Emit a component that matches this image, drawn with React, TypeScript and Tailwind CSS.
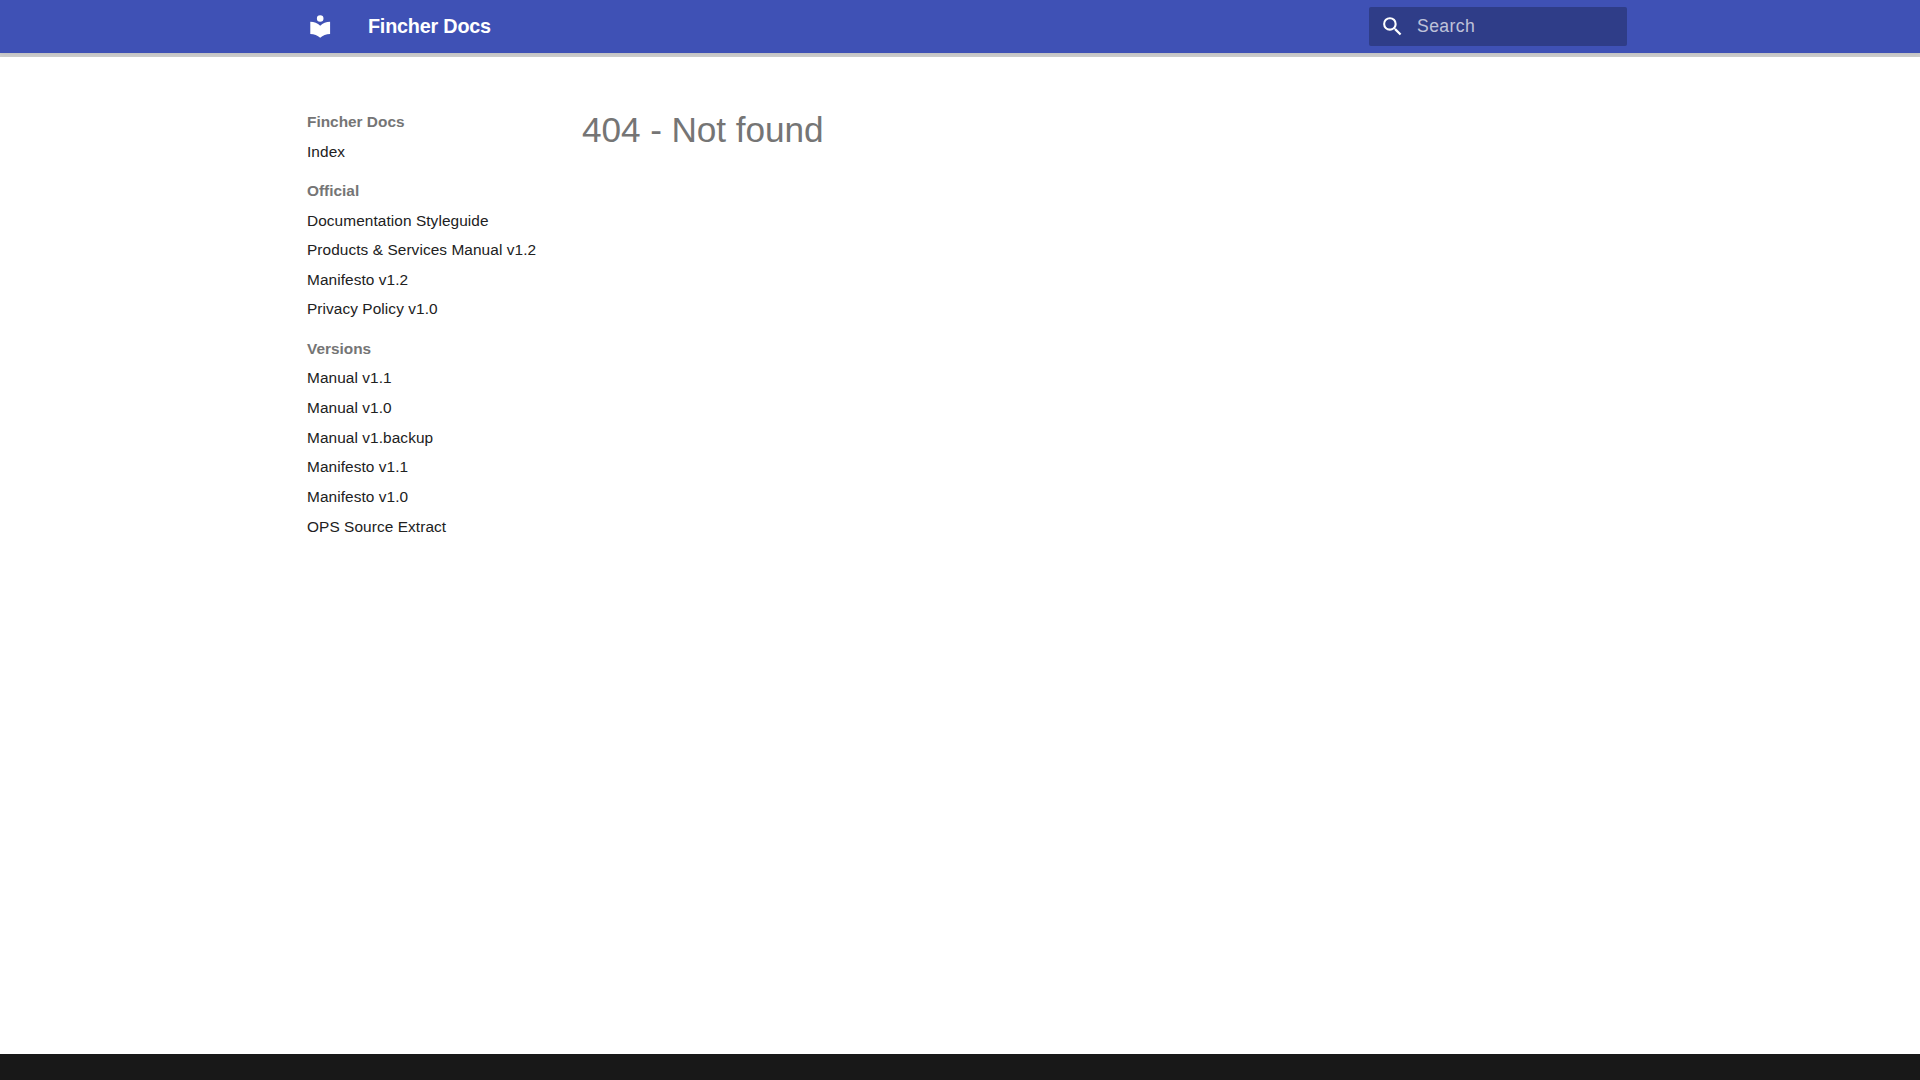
const sections = [
  { title: 'Fincher Docs', links: ['Index'] },
  {
    title: 'Official',
    links: ['Documentation Styleguide', 'Products & Services Manual v1.2', 'Manifesto v1.2', 'Privacy Policy v1.0'],
  },
  {
    title: 'Versions',
    links: ['Manual v1.1', 'Manual v1.0', 'Manual v1.backup', 'Manifesto v1.1', 'Manifesto v1.0', 'OPS Source Extract'],
  },
];

const Header = () => (
  <header className="h-[53px] shrink-0 bg-[#3f51b5] text-white shadow-[0_0_4px_rgba(0,0,0,0.1),0_4px_0_rgba(0,0,0,0.2)] relative z-10">
    <div className="mx-auto flex h-full w-[1342px] items-center pl-[18px] pr-[4px]">
      <svg viewBox="0 0 24 24" className="-mt-[1px] h-[26.4px] w-[26.4px] fill-white">
        <path d="M12 8a3 3 0 0 0 3-3 3 3 0 0 0-3-3 3 3 0 0 0-3 3 3 3 0 0 0 3 3m0 3.54C9.64 9.35 6.5 8 3 8v11c3.5 0 6.64 1.35 9 3.54 2.36-2.19 5.5-3.54 9-3.54V8c-3.5 0-6.64 1.35-9 3.54Z" />
      </svg>
      <div className="ml-[34.6px] flex-1 text-[19.8px] font-bold tracking-[-0.2px]">Fincher Docs</div>
      <div className="flex h-[39px] w-[258px] items-center rounded-[2px] bg-[#2f3d88] pl-[11px] text-[17.6px] tracking-[0.4px] text-white/70">
        <svg viewBox="0 0 24 24" className="h-[25px] w-[25px] fill-white">
          <path d="M9.5 3A6.5 6.5 0 0 1 16 9.5c0 1.61-.59 3.09-1.56 4.23l.27.27h.79l5 5-1.5 1.5-5-5v-.79l-.27-.27A6.516 6.516 0 0 1 9.5 16 6.5 6.5 0 0 1 3 9.5 6.5 6.5 0 0 1 9.5 3m0 2C7 5 5 7 5 9.5S7 14 9.5 14 14 12 14 9.5 12 5 9.5 5Z" />
        </svg>
        <span className="ml-[12px]">Search</span>
      </div>
    </div>
  </header>
);

const Sidebar = () => (
  <nav className="w-[275px] shrink-0 pt-[59px] pl-[18px] text-[15.4px] leading-[20.02px]">
    {sections.map((s, i) => (
      <div key={s.title} className={i > 0 ? 'mt-[19.25px]' : ''}>
        <div className="font-bold text-[#757575]">{s.title}</div>
        {s.links.map((l) => (
          <div key={l} className="mt-[9.625px] tracking-[0.08px] text-[#212121]">
            {l}
          </div>
        ))}
      </div>
    ))}
  </nav>
);

export default function App() {
  return (
    <div className="flex h-[1080px] flex-col bg-white font-['Liberation_Sans',sans-serif] [text-rendering:optimizeLegibility] antialiased">
      <Header />
      <main className="mx-auto flex w-[1342px] flex-1">
        <Sidebar />
        <div className="pl-[18px] pt-[54px]">
          <h1 className="text-[35.2px] font-light leading-[1.3] tracking-[-0.08px] text-[#757575]">404 - Not found</h1>
        </div>
      </main>
      <footer className="h-[26px] shrink-0 bg-[#181818]" />
    </div>
  );
}
